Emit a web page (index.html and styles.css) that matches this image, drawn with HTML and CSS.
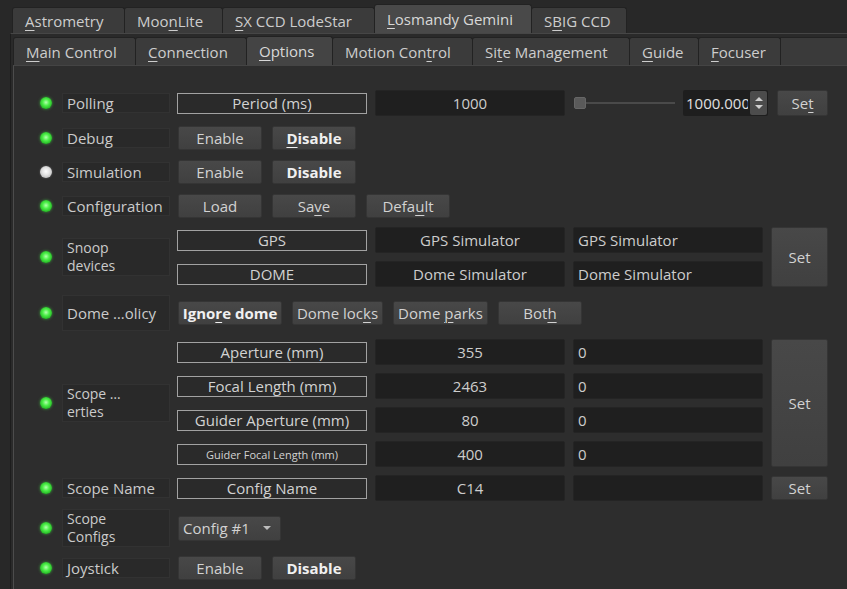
FILE: index.html
```html
<!DOCTYPE html>
<html lang="en">
<head>
<meta charset="utf-8">
<title>Losmandy Gemini - Options</title>
<link rel="stylesheet" href="styles.css">
</head>
<body>
<div class="window">
  <div class="tabbar outer-tabs">
    <div class="tab w112"><span><u>A</u>strometry</span></div>
    <div class="tab w98"><span>Moo<u>n</u>Lite</span></div>
    <div class="tab w152"><span><u>S</u>X CCD LodeStar</span></div>
    <div class="tab w157 active"><span><u>L</u>osmandy Gemini</span></div>
    <div class="tab w95"><span>S<u>B</u>IG CCD</span></div>
  </div>
  <div class="outer-pane">
    <div class="tabbar inner-tabs">
      <div class="tab w122"><span><u>M</u>ain Control</span></div>
      <div class="tab w111"><span><u>C</u>onnection</span></div>
      <div class="tab w87 active"><span><u>O</u>ptions</span></div>
      <div class="tab w140"><span>Motion Con<u>t</u>rol</span></div>
      <div class="tab w157"><span>Si<u>t</u>e Management</span></div>
      <div class="tab w70"><span><u>G</u>uide</span></div>
      <div class="tab w83"><span><u>F</u>ocuser</span></div>
      <div class="tab-filler"></div>
    </div>
    <div class="pane">
      <div class="props">

        <div class="prop r28">
          <span class="led on"></span>
          <div class="plabel">Polling</div>
          <div class="pbody">
            <div class="flabel">Period (ms)</div>
            <div class="val gap8">1000</div>
            <div class="slider"><span class="handle"></span><span class="track"></span></div>
            <div class="spin"><span class="spin-text"><span class="spin-inner">1000.000</span></span><span class="spin-arrows"><span class="up"></span><span class="down"></span></span></div>
            <div class="btn set-small"><span>Se<u>t</u></span></div>
          </div>
        </div>

        <div class="prop r26">
          <span class="led on"></span>
          <div class="plabel">Debug</div>
          <div class="btns">
            <div class="btn"><span>Enable</span></div>
            <div class="btn bold"><span><u>D</u>isable</span></div>
          </div>
        </div>

        <div class="prop r26">
          <span class="led off"></span>
          <div class="plabel">Simulation</div>
          <div class="btns">
            <div class="btn"><span>Enable</span></div>
            <div class="btn bold"><span>Disable</span></div>
          </div>
        </div>

        <div class="prop r26">
          <span class="led on"></span>
          <div class="plabel">Configuration</div>
          <div class="btns">
            <div class="btn"><span>Load</span></div>
            <div class="btn"><span>Sa<u>v</u>e</span></div>
            <div class="btn"><span>Defa<u>u</u>lt</span></div>
          </div>
        </div>

        <div class="prop r60">
          <span class="led on"></span>
          <div class="plabel two"><span>Snoop<br>devices</span></div>
          <div class="grid">
            <div class="flabel">GPS</div>
            <div class="val">GPS Simulator</div>
            <div class="val left">GPS Simulator</div>
            <div class="btn set-tall rows2"><span>Set</span></div>
            <div class="flabel">DOME</div>
            <div class="val">Dome Simulator</div>
            <div class="val left">Dome Simulator</div>
          </div>
        </div>

        <div class="prop r36">
          <span class="led on"></span>
          <div class="plabel tall">Dome …olicy</div>
          <div class="btns">
            <div class="btn bold w104"><span>Igno<u>r</u>e dome</span></div>
            <div class="btn w91"><span>Dome loc<u>k</u>s</span></div>
            <div class="btn w95b"><span>Dome <u>p</u>arks</span></div>
            <div class="btn"><span>Bot<u>h</u></span></div>
          </div>
        </div>

        <div class="prop r128">
          <span class="led on"></span>
          <div class="plabel two"><span>Scope …<br>erties</span></div>
          <div class="grid">
            <div class="flabel">Aperture (mm)</div>
            <div class="val">355</div>
            <div class="val left">0</div>
            <div class="btn set-tall rows4"><span>Set</span></div>
            <div class="flabel">Focal Length (mm)</div>
            <div class="val">2463</div>
            <div class="val left">0</div>
            <div class="flabel">Guider Aperture (mm)</div>
            <div class="val">80</div>
            <div class="val left">0</div>
            <div class="flabel small">Guider Focal Length (mm)</div>
            <div class="val">400</div>
            <div class="val left">0</div>
          </div>
        </div>

        <div class="prop r26">
          <span class="led on"></span>
          <div class="plabel">Scope Name</div>
          <div class="grid">
            <div class="flabel">Config Name</div>
            <div class="val">C14</div>
            <div class="val left"></div>
            <div class="btn set-row"><span>Set</span></div>
          </div>
        </div>

        <div class="prop r38">
          <span class="led on"></span>
          <div class="plabel two"><span>Scope<br>Configs</span></div>
          <div class="btns">
            <div class="combo"><span>Config #1</span><span class="caret"></span></div>
          </div>
        </div>

        <div class="prop r26">
          <span class="led on"></span>
          <div class="plabel">Joystick</div>
          <div class="btns">
            <div class="btn"><span>Enable</span></div>
            <div class="btn bold"><span>Disable</span></div>
          </div>
        </div>

      </div>
    </div>
  </div>
</div>
</body>
</html>
```

FILE: styles.css
```css
* { box-sizing: border-box; }
html, body { margin: 0; height: 100%; }
body {
  background: #282828;
  font-family: "Open Sans", "Noto Sans", sans-serif;
  font-size: 15px;
  color: #cccccc;
  overflow: hidden;
}
u {
  text-decoration: underline;
  text-decoration-thickness: 1px;
  text-underline-offset: 3px;
}

.window { padding-top: 4px; }

/* tab bars */
.tabbar { display: flex; align-items: flex-end; }
.outer-tabs { height: 29px; padding-left: 12px; }
.tab {
  height: 26px;
  display: flex;
  align-items: center;
  padding-left: 12px;
  background: #3b3b3b;
  border: 1px solid #222;
  border-bottom: none;
  border-radius: 3px 3px 0 0;
  margin-right: -1px;
  white-space: nowrap;
  flex: none;
  color: #cdcdcd;
}
.tab.active { height: 29px; background: #494949; color: #d8d8d8; }
.w70 { width: 70px; } .w83 { width: 83px; } .w87 { width: 87px; }
.w95 { width: 96px; } .w98 { width: 99px; } .w111 { width: 112px; }
.w112 { width: 113px; } .w122 { width: 123px; } .w140 { width: 141px; }
.w152 { width: 153px; } .w157 { width: 158px; }

.outer-pane {
  margin-left: 10px;
  border-left: 1px solid #1d1d1d;
  border-top: 1px solid #464646;
  background: #2a2a2a;
  height: 560px;
}
.inner-tabs { height: 31px; padding-left: 2px; }
.inner-tabs .tab { height: 28px; }
.inner-tabs .tab.active { height: 29px; background: #444; }
.tab-filler {
  flex: 1;
  height: 28px;
  background: #3a3a3a;
  border-top: 1px solid #222;
  border-left: 1px solid #222;
}
.pane {
  margin-left: 2px;
  border-left: 1px solid #4c4c4c;
  border-top: 1px solid #444;
  background: #2d2d2d;
  padding: 23px 0 0 26px;
  height: 540px;
}

/* property rows */
.props { display: flex; flex-direction: column; gap: 8px; }
.prop { display: flex; align-items: center; }
.r26 { height: 26px; } .r28 { height: 28px; } .r36 { height: 36px; }
.r38 { height: 38px; } .r60 { height: 60px; } .r128 { height: 128px; }

.led {
  width: 12px; height: 12px;
  border-radius: 50%;
  flex: none;
  margin-right: 10px;
}
.led.on {
  background: radial-gradient(circle at 50% 45%, #b6ffb0 0, #4ef04a 35%, #22b522 75%, #1a7d1a 100%);
  box-shadow: 0 0 3px rgba(80, 255, 80, 0.55);
}
.led.off {
  background: radial-gradient(circle at 50% 45%, #ffffff 0, #e4e4e4 40%, #a8a8a8 100%);
  box-shadow: 0 0 2px rgba(255, 255, 255, 0.3);
}

.plabel {
  width: 108px;
  height: 20px;
  flex: none;
  margin-right: 7px;
  background: #292929;
  border: 1px solid #323232;
  padding-left: 4px;
  display: flex;
  align-items: center;
  line-height: 18px;
  white-space: nowrap;
  color: #cbcbcb;
}
.plabel.two { height: 38px; font-size: 14px; line-height: 18px; }
.plabel.tall { height: 36px; }

.pbody { display: flex; align-items: center; }

.flabel {
  width: 190px;
  height: 21px;
  border: 1px solid #a2a2a2;
  background: #2a2a2a;
  text-align: center;
  line-height: 19px;
  white-space: nowrap;
  overflow: hidden;
  color: #d2d2d2;
}
.flabel.small { font-size: 11px; }

.val {
  width: 190px;
  height: 26px;
  background: #1f1f1f;
  border: 1px solid #242424;
  border-radius: 2px;
  text-align: center;
  line-height: 24px;
  white-space: nowrap;
  color: #cdcdcd;
}
.val.left { text-align: left; padding-left: 4px; }
.gap8 { margin-left: 8px; }

.btn {
  width: 84px;
  height: 24px;
  background: linear-gradient(#484848, #404040);
  border: 1px solid #353535;
  border-radius: 2px;
  display: flex;
  align-items: center;
  justify-content: center;
  color: #d2d2d2;
  white-space: nowrap;
  flex: none;
}
.btn.bold { font-weight: 700; color: #f0f0f0; }
.btn.w104 { width: 104px; }
.btn.w91 { width: 91px; }
.btn.w95b { width: 95px; }
.btns { display: flex; gap: 10px; align-items: center; padding-left: 1px; }

.set-small { width: 51px; height: 26px; margin-left: 9px; }
.set-row { width: 57px; height: 24px; }
.set-tall { width: 57px; height: auto; align-self: stretch; }
.rows2 { grid-column: 4; grid-row: 1 / 3; }
.rows4 { grid-column: 4; grid-row: 1 / 5; }

.grid {
  display: grid;
  grid-template-columns: 190px 190px 190px 57px;
  grid-auto-rows: 26px;
  column-gap: 8px;
  row-gap: 8px;
  align-items: center;
}

/* slider */
.slider {
  width: 101px;
  margin-left: 9px;
  display: flex;
  align-items: center;
}
.handle {
  width: 12px; height: 12px;
  background: #5a5a5a;
  border: 1px solid #666;
  border-radius: 2px;
  flex: none;
}
.track { flex: 1; height: 2px; background: #4a4a4a; }

/* spin box */
.spin {
  width: 85px;
  height: 26px;
  margin-left: 8px;
  background: #1e1e1e;
  border-radius: 2px;
  display: flex;
  align-items: stretch;
}
.spin-text {
  width: 62px;
  flex: none;
  overflow: hidden;
  white-space: nowrap;
  margin-left: 3px;
  line-height: 26px;
  color: #e0e0e0;
}
.spin-inner { display: inline-block; width: 80px; }
.spin-arrows {
  width: 17px;
  flex: none;
  margin: 1px 1px 1px auto;
  background: #4c4c4c;
  border-radius: 2px;
  display: flex;
  flex-direction: column;
  justify-content: center;
  align-items: center;
  gap: 4px;
}
.up, .down { width: 0; height: 0; border-left: 4px solid transparent; border-right: 4px solid transparent; }
.up { border-bottom: 4px solid #cfcfcf; }
.down { border-top: 4px solid #cfcfcf; }

/* combo */
.combo {
  width: 103px;
  height: 25px;
  background: linear-gradient(#484848, #404040);
  border: 1px solid #353535;
  border-radius: 2px;
  display: flex;
  align-items: center;
  justify-content: space-between;
  padding: 0 9px 0 4px;
  color: #d2d2d2;
  white-space: nowrap;
}
.caret {
  width: 0; height: 0;
  border-left: 4px solid transparent;
  border-right: 4px solid transparent;
  border-top: 4px solid #bdbdbd;
}
```
